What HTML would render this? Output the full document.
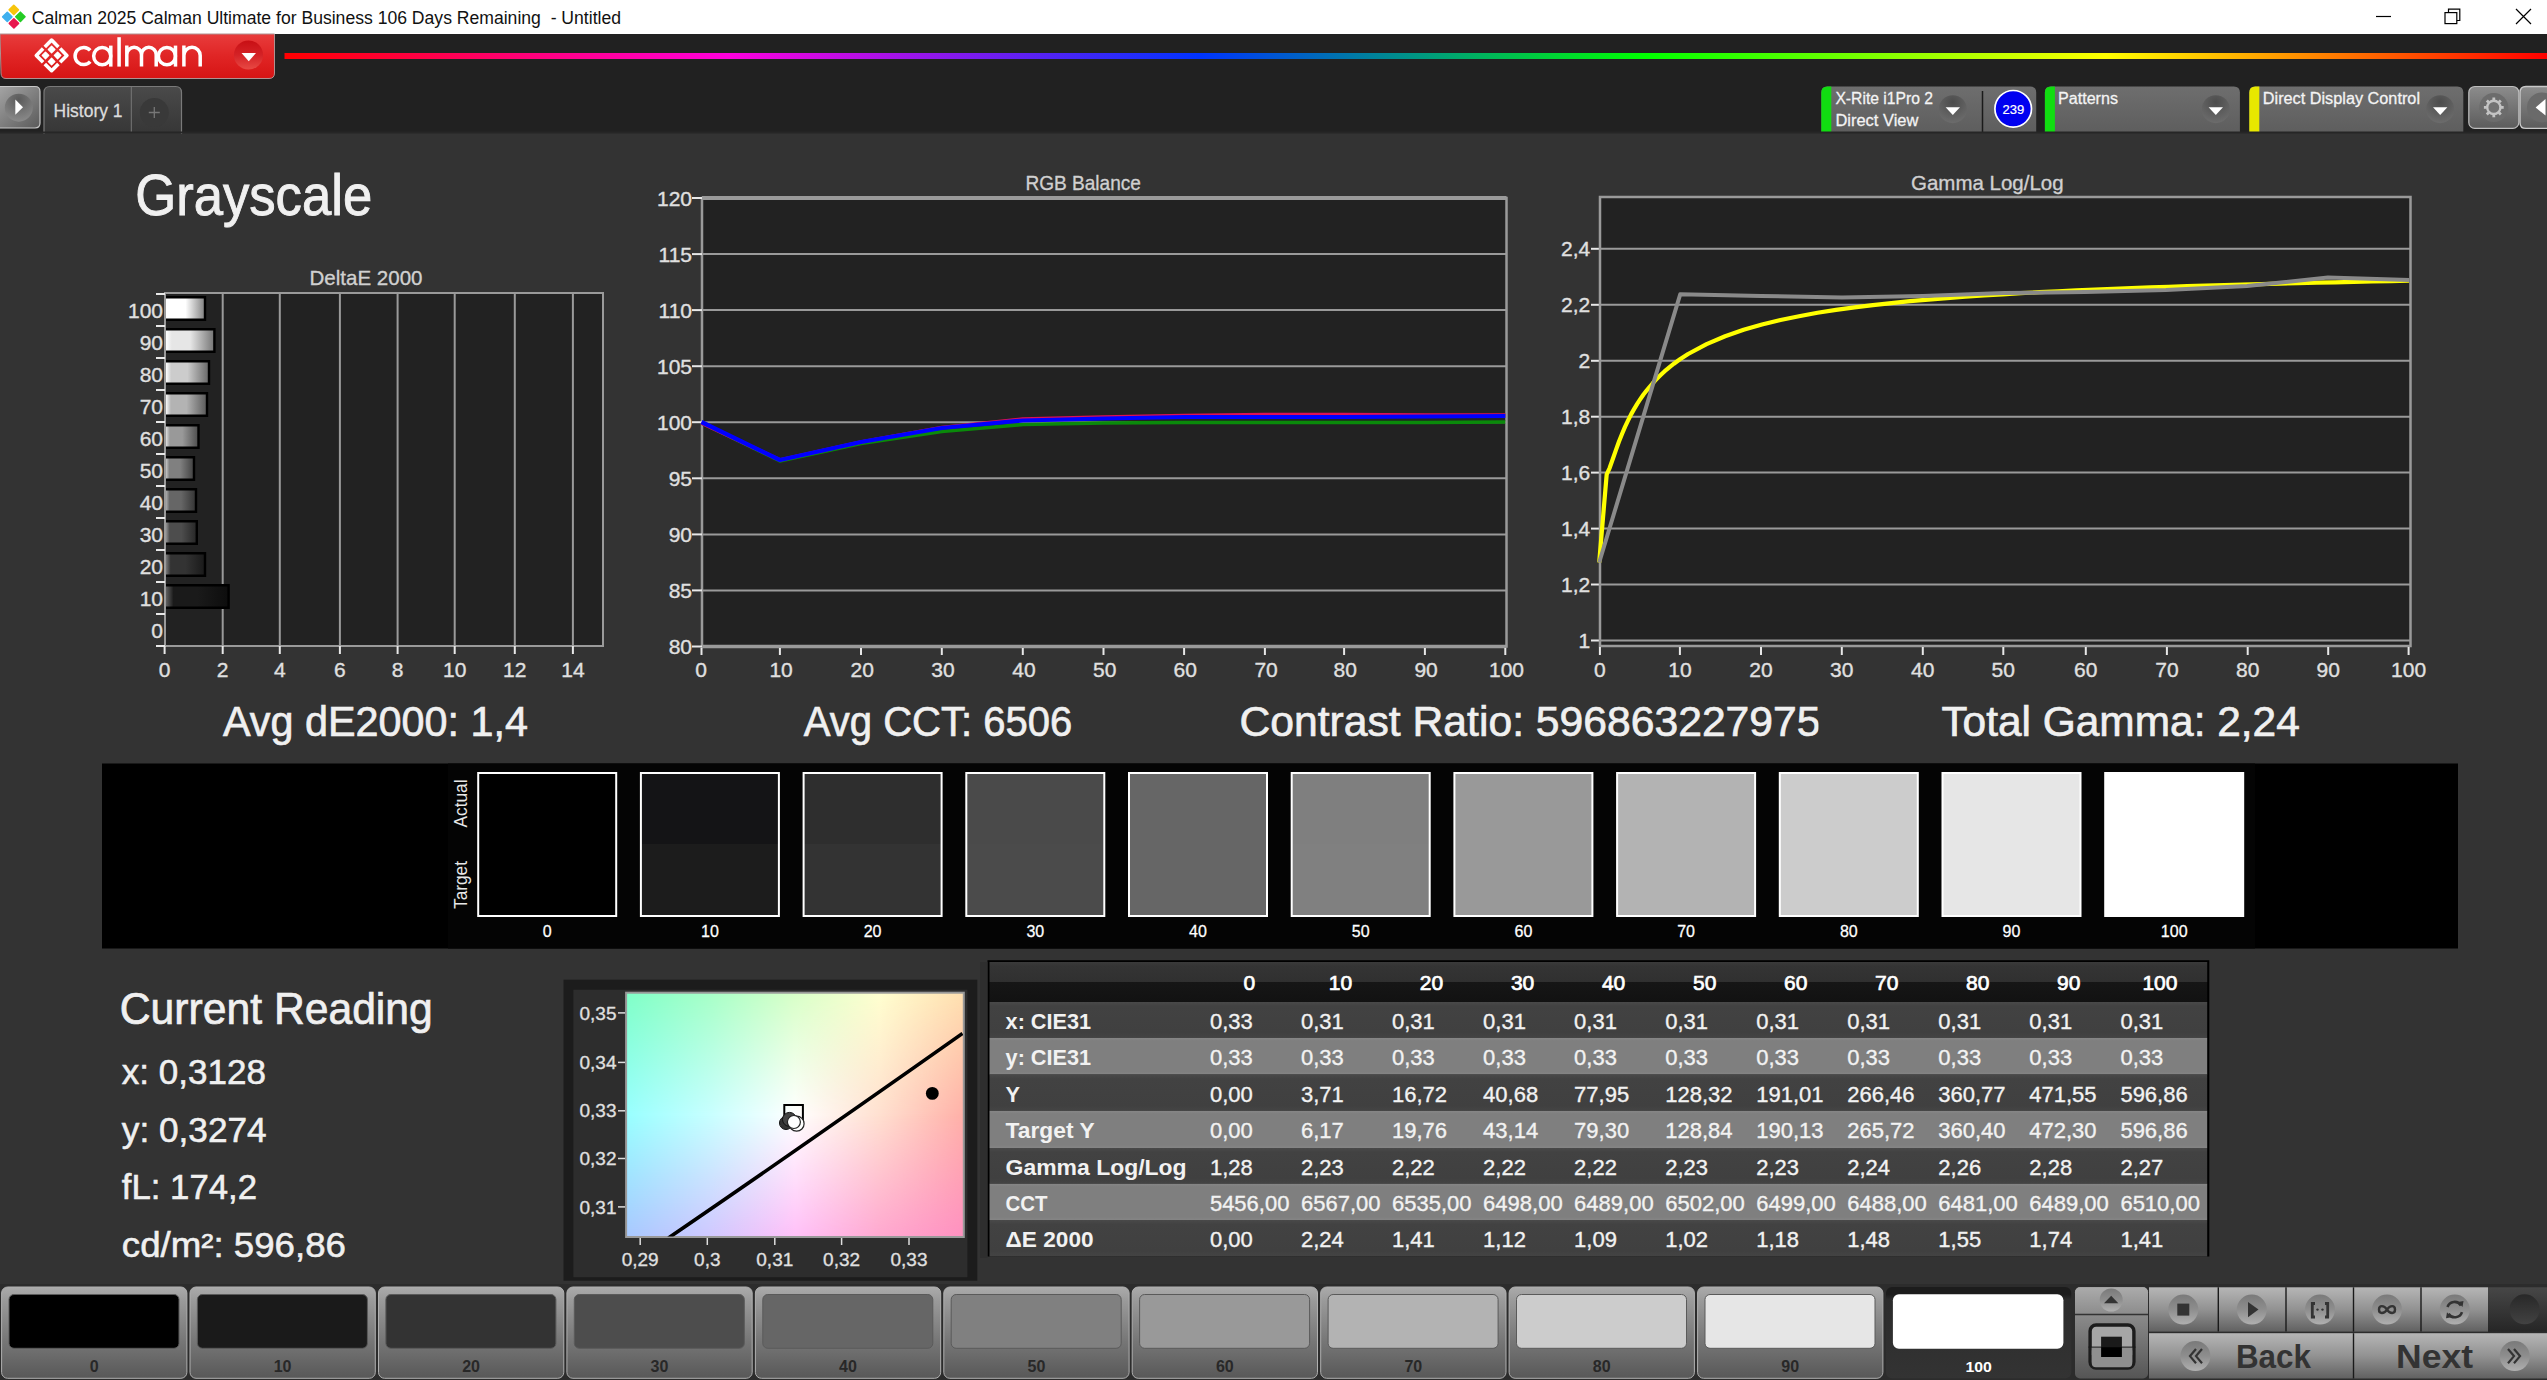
<!DOCTYPE html>
<html><head><meta charset="utf-8"><title>Calman</title>
<style>
html,body{margin:0;padding:0;background:#333;overflow:hidden;}
svg{display:block;}
text{font-family:"Liberation Sans", sans-serif;}
</style></head><body>
<svg width="2547" height="1380" viewBox="0 0 2547 1380">
<defs>
<linearGradient id="gRed" x1="0" y1="0" x2="0" y2="1">
<stop offset="0" stop-color="#e83c3c"/><stop offset="0.5" stop-color="#e02525"/><stop offset="1" stop-color="#d61414"/></linearGradient>
<linearGradient id="gRedBtn" x1="0" y1="0" x2="0" y2="1">
<stop offset="0" stop-color="#c80f14"/><stop offset="0.5" stop-color="#d42226"/><stop offset="1" stop-color="#e84a44"/></linearGradient>
<linearGradient id="gRain" x1="0" y1="0" x2="1" y2="0">
<stop offset="0" stop-color="#ff0000"/>
<stop offset="0.196" stop-color="#ff00dd"/>
<stop offset="0.404" stop-color="#0033ff"/>
<stop offset="0.602" stop-color="#00ff00"/>
<stop offset="0.805" stop-color="#ffff00"/>
<stop offset="1" stop-color="#ff0000"/></linearGradient>
<linearGradient id="gPlay" x1="0" y1="0" x2="1" y2="1">
<stop offset="0" stop-color="#a8a8a8"/><stop offset="1" stop-color="#5a5a5a"/></linearGradient>
<radialGradient id="gPlayC" cx="0.5" cy="0.2" r="0.8">
<stop offset="0" stop-color="#5a5a5a"/><stop offset="1" stop-color="#8a8a8a"/></radialGradient>
<linearGradient id="gTab" x1="0" y1="0" x2="0" y2="1">
<stop offset="0" stop-color="#4a4a4a"/><stop offset="1" stop-color="#363636"/></linearGradient>
<linearGradient id="gDev" x1="0" y1="0" x2="0" y2="1">
<stop offset="0" stop-color="#6e6e6e"/><stop offset="1" stop-color="#5e5e5e"/></linearGradient>
<radialGradient id="gDrop" cx="0.5" cy="0.25" r="0.75">
<stop offset="0" stop-color="#4c4c4c"/><stop offset="1" stop-color="#6c6c6c"/></radialGradient>
<linearGradient id="gGearBtn" x1="0" y1="0" x2="0" y2="1">
<stop offset="0" stop-color="#8c8c8c"/><stop offset="1" stop-color="#5c5c5c"/></linearGradient>
<linearGradient id="gBar1" x1="0" y1="0" x2="1" y2="0"><stop offset="0" stop-color="rgb(96,96,96)"/><stop offset="0.12" stop-color="rgb(26,26,26)"/><stop offset="0.5" stop-color="rgb(26,26,26)"/><stop offset="1" stop-color="rgb(13,13,13)"/></linearGradient>
<linearGradient id="gBar2" x1="0" y1="0" x2="1" y2="0"><stop offset="0" stop-color="rgb(121,121,121)"/><stop offset="0.12" stop-color="rgb(51,51,51)"/><stop offset="0.5" stop-color="rgb(51,51,51)"/><stop offset="1" stop-color="rgb(25,25,25)"/></linearGradient>
<linearGradient id="gBar3" x1="0" y1="0" x2="1" y2="0"><stop offset="0" stop-color="rgb(147,147,147)"/><stop offset="0.12" stop-color="rgb(77,77,77)"/><stop offset="0.5" stop-color="rgb(77,77,77)"/><stop offset="1" stop-color="rgb(38,38,38)"/></linearGradient>
<linearGradient id="gBar4" x1="0" y1="0" x2="1" y2="0"><stop offset="0" stop-color="rgb(172,172,172)"/><stop offset="0.12" stop-color="rgb(102,102,102)"/><stop offset="0.5" stop-color="rgb(102,102,102)"/><stop offset="1" stop-color="rgb(51,51,51)"/></linearGradient>
<linearGradient id="gBar5" x1="0" y1="0" x2="1" y2="0"><stop offset="0" stop-color="rgb(198,198,198)"/><stop offset="0.12" stop-color="rgb(128,128,128)"/><stop offset="0.5" stop-color="rgb(128,128,128)"/><stop offset="1" stop-color="rgb(64,64,64)"/></linearGradient>
<linearGradient id="gBar6" x1="0" y1="0" x2="1" y2="0"><stop offset="0" stop-color="rgb(223,223,223)"/><stop offset="0.12" stop-color="rgb(153,153,153)"/><stop offset="0.5" stop-color="rgb(153,153,153)"/><stop offset="1" stop-color="rgb(76,76,76)"/></linearGradient>
<linearGradient id="gBar7" x1="0" y1="0" x2="1" y2="0"><stop offset="0" stop-color="rgb(249,249,249)"/><stop offset="0.12" stop-color="rgb(179,179,179)"/><stop offset="0.5" stop-color="rgb(179,179,179)"/><stop offset="1" stop-color="rgb(89,89,89)"/></linearGradient>
<linearGradient id="gBar8" x1="0" y1="0" x2="1" y2="0"><stop offset="0" stop-color="rgb(255,255,255)"/><stop offset="0.12" stop-color="rgb(204,204,204)"/><stop offset="0.5" stop-color="rgb(204,204,204)"/><stop offset="1" stop-color="rgb(102,102,102)"/></linearGradient>
<linearGradient id="gBar9" x1="0" y1="0" x2="1" y2="0"><stop offset="0" stop-color="rgb(255,255,255)"/><stop offset="0.12" stop-color="rgb(230,230,230)"/><stop offset="0.5" stop-color="rgb(230,230,230)"/><stop offset="1" stop-color="rgb(115,115,115)"/></linearGradient>
<linearGradient id="gBar10" x1="0" y1="0" x2="1" y2="0"><stop offset="0" stop-color="rgb(255,255,255)"/><stop offset="0.12" stop-color="rgb(255,255,255)"/><stop offset="0.5" stop-color="rgb(255,255,255)"/><stop offset="1" stop-color="rgb(127,127,127)"/></linearGradient>
<linearGradient id="gCieT" x1="0" y1="0" x2="1" y2="0"><stop offset="0.0" stop-color="rgb(128,255,200)"/><stop offset="0.25" stop-color="rgb(168,255,200)"/><stop offset="0.5" stop-color="rgb(216,255,200)"/><stop offset="0.75" stop-color="rgb(255,255,208)"/><stop offset="1.0" stop-color="rgb(255,224,176)"/></linearGradient>
<linearGradient id="gCieM" x1="0" y1="0" x2="1" y2="0"><stop offset="0.0" stop-color="rgb(152,255,255)"/><stop offset="0.25" stop-color="rgb(200,255,255)"/><stop offset="0.5" stop-color="rgb(255,255,255)"/><stop offset="0.75" stop-color="rgb(255,224,208)"/><stop offset="1.0" stop-color="rgb(255,176,168)"/></linearGradient>
<linearGradient id="gCieB" x1="0" y1="0" x2="1" y2="0"><stop offset="0.0" stop-color="rgb(168,200,255)"/><stop offset="0.25" stop-color="rgb(208,200,255)"/><stop offset="0.5" stop-color="rgb(255,192,248)"/><stop offset="0.75" stop-color="rgb(255,168,208)"/><stop offset="1.0" stop-color="rgb(255,144,192)"/></linearGradient>
<linearGradient id="gMaskM" x1="0" y1="0" x2="0" y2="1"><stop offset="0" stop-color="#000"/><stop offset="0.5" stop-color="#fff"/><stop offset="1" stop-color="#fff"/></linearGradient>
<linearGradient id="gMaskB" x1="0" y1="0" x2="0" y2="1"><stop offset="0" stop-color="#000"/><stop offset="0.5" stop-color="#000"/><stop offset="1" stop-color="#fff"/></linearGradient>
<mask id="mCieM" maskUnits="userSpaceOnUse" x="626.1" y="992.7" width="337.69999999999993" height="244.29999999999995"><rect x="626.1" y="992.7" width="337.69999999999993" height="244.29999999999995" fill="url(#gMaskM)"/></mask>
<mask id="mCieB" maskUnits="userSpaceOnUse" x="626.1" y="992.7" width="337.69999999999993" height="244.29999999999995"><rect x="626.1" y="992.7" width="337.69999999999993" height="244.29999999999995" fill="url(#gMaskB)"/></mask>
<linearGradient id="gHdr" x1="0" y1="0" x2="0" y2="1">
<stop offset="0" stop-color="#3a3a3a"/><stop offset="0.1" stop-color="#343434"/><stop offset="0.5" stop-color="#303030"/>
<stop offset="0.5" stop-color="#161616"/><stop offset="1" stop-color="#121212"/></linearGradient>
<linearGradient id="gRowL" x1="0" y1="0" x2="0" y2="1">
<stop offset="0" stop-color="#878787"/><stop offset="0.08" stop-color="#7f7f7f"/><stop offset="0.92" stop-color="#7f7f7f"/><stop offset="1" stop-color="#858585"/></linearGradient>
<linearGradient id="gRowD" x1="0" y1="0" x2="0" y2="1">
<stop offset="0" stop-color="#494949"/><stop offset="0.12" stop-color="#424242"/><stop offset="0.85" stop-color="#404040"/><stop offset="1" stop-color="#444"/></linearGradient>
<linearGradient id="gBtn" x1="0" y1="0" x2="0" y2="1">
<stop offset="0" stop-color="#ababab"/><stop offset="0.15" stop-color="#9a9a9a"/><stop offset="0.6" stop-color="#767676"/><stop offset="1" stop-color="#585858"/></linearGradient>
<linearGradient id="gBtnSel" x1="0" y1="0" x2="0" y2="1">
<stop offset="0" stop-color="#1c1c1c"/><stop offset="0.08" stop-color="#1c1c1c"/><stop offset="0.14" stop-color="#2c2c2c"/><stop offset="1" stop-color="#333"/></linearGradient>
<linearGradient id="gCtl" x1="0" y1="0" x2="0" y2="1">
<stop offset="0" stop-color="#b6b6b6"/><stop offset="0.5" stop-color="#929292"/><stop offset="1" stop-color="#616161"/></linearGradient>
<linearGradient id="gDarkSec" x1="0" y1="0" x2="0" y2="1">
<stop offset="0" stop-color="#474747"/><stop offset="1" stop-color="#262626"/></linearGradient>
<linearGradient id="gDarkCirc" x1="0" y1="0" x2="0" y2="1">
<stop offset="0" stop-color="#282828"/><stop offset="1" stop-color="#424242"/></linearGradient>
<linearGradient id="gUpBtn" x1="0" y1="0" x2="0" y2="1">
<stop offset="0" stop-color="#ababab"/><stop offset="1" stop-color="#8c8c8c"/></linearGradient>
<linearGradient id="gCtl2" x1="0" y1="0" x2="0" y2="1">
<stop offset="0" stop-color="#a2a2a2"/><stop offset="1" stop-color="#555"/></linearGradient>
<linearGradient id="gIco" x1="0" y1="0" x2="0" y2="1">
<stop offset="0" stop-color="#7a7a7a"/><stop offset="0.5" stop-color="#8e8e8e"/><stop offset="1" stop-color="#b0b0b0"/></linearGradient>
</defs>
<rect x="0" y="0" width="2547" height="1380" fill="#333"/>
<rect x="0" y="0" width="2547" height="34" fill="#fff"/>
<rect x="0" y="34" width="2547" height="99" fill="#212121"/>
<path d="M13.8 5.300000000000001 L18.4 9.9 L13.8 14.5 L9.200000000000001 9.9 Z" fill="#f7c50c" stroke="#f7c50c" stroke-width="1.6" stroke-linejoin="round"/>
<path d="M20.4 12.200000000000001 L25.0 16.8 L20.4 21.4 L15.799999999999999 16.8 Z" fill="#25cc25" stroke="#25cc25" stroke-width="1.6" stroke-linejoin="round"/>
<path d="M7.3 12.299999999999999 L11.899999999999999 16.9 L7.3 21.5 L2.7 16.9 Z" fill="#3fb0ee" stroke="#3fb0ee" stroke-width="1.6" stroke-linejoin="round"/>
<path d="M13.9 18.799999999999997 L18.5 23.4 L13.9 28.0 L9.3 23.4 Z" fill="#e8194e" stroke="#e8194e" stroke-width="1.6" stroke-linejoin="round"/>
<text x="31.7" y="23.7" font-size="18.3" fill="#111" font-weight="normal" text-anchor="start" textLength="589.3" lengthAdjust="spacingAndGlyphs" style="white-space:pre">Calman 2025 Calman Ultimate for Business 106 Days Remaining  - Untitled</text>
<line x1="2376" y1="16.5" x2="2391" y2="16.5" stroke="#000" stroke-width="1.2"/>
<rect x="2445" y="12.6" width="11.8" height="11" fill="none" stroke="#000" stroke-width="1.2"/>
<path d="M2448.5 12.6 V9.2 H2459.8 V20.5 H2456.8" fill="none" stroke="#000" stroke-width="1.2"/>
<path d="M2516 9 L2531 24 M2531 9 L2516 24" stroke="#000" stroke-width="1.2"/>
<path d="M0 34 H274.5 V73 Q274.5 78.5 269 78.5 H6 Q1 78.5 1 73 Z" fill="url(#gRed)" stroke="#b09090" stroke-width="1"/>
<g stroke="#fff" stroke-width="3.6" fill="none" stroke-linecap="butt" stroke-linejoin="round">
<path d="M43.10 62.20 L36.30 55.40 L43.10 48.60"/>
<path d="M44.80 46.90 L51.60 40.10 L58.40 46.90"/>
<path d="M60.10 48.60 L66.90 55.40 L60.10 62.20"/>
<path d="M58.40 63.90 L51.60 70.70 L44.80 63.90"/>
</g>
<path d="M51.6 46.2 L54.9 49.5 L51.6 52.8 L48.300000000000004 49.5 Z" fill="#fff" stroke="#fff" stroke-width="1.3" stroke-linejoin="round"/>
<path d="M57.6 52.1 L60.9 55.4 L57.6 58.699999999999996 L54.300000000000004 55.4 Z" fill="#fff" stroke="#fff" stroke-width="1.3" stroke-linejoin="round"/>
<path d="M51.6 58.300000000000004 L54.9 61.6 L51.6 64.9 L48.300000000000004 61.6 Z" fill="#fff" stroke="#fff" stroke-width="1.3" stroke-linejoin="round"/>
<path d="M45.5 52.1 L48.8 55.4 L45.5 58.699999999999996 L42.2 55.4 Z" fill="#fff" stroke="#fff" stroke-width="1.3" stroke-linejoin="round"/>
<g fill="none" stroke="#fff" stroke-width="3.5"><path d="M90.2 50.4 A8.6 8.6 0 1 0 90.2 61.6"/><circle cx="102.2" cy="56.1" r="8.55"/><path d="M110.8 45.6 V66.6"/><path d="M119.1 37.2 V66.6"/><path d="M126.8 45.6 V66.6 M126.8 54.7 A7.35 7.35 0 0 1 141.5 54.7 V66.6 M141.5 54.7 A7.35 7.35 0 0 1 156.2 54.7 V66.6"/><circle cx="166.9" cy="56.1" r="8.55"/><path d="M175.5 45.6 V66.6"/><path d="M183.9 45.6 V66.6 M183.9 55.5 A8.15 8.15 0 0 1 200.2 55.5 V66.6"/></g>
<circle cx="248.5" cy="55" r="14.6" fill="url(#gRedBtn)"/>
<path d="M241.5 53 H256 L248.75 61.2 Z" fill="#fff"/>
<rect x="284.5" y="53" width="2262.5" height="6" fill="url(#gRain)"/>
<path d="M-5 86.5 H35 Q40 86.5 40 91.5 V123 Q40 128 35 128 H-5 Z" fill="url(#gPlay)" stroke="#c8c8c8" stroke-width="1.2"/>
<circle cx="18.8" cy="107.7" r="14" fill="url(#gPlayC)"/>
<path d="M15.3 99.5 L23 107.2 L15.3 114.8 Z" fill="#fff"/>
<path d="M44 134 V92.5 Q44 86.5 50 86.5 H175.5 Q181.5 86.5 181.5 92.5 V134" fill="url(#gTab)" stroke="#7a7a7a" stroke-width="1.2"/>
<line x1="131.3" y1="87" x2="131.3" y2="133" stroke="#777" stroke-width="1"/>
<text x="53.6" y="117.2" font-size="19.0" fill="#dcdcdc" font-weight="normal" text-anchor="start" textLength="68.9" lengthAdjust="spacingAndGlyphs" stroke="#dcdcdc" stroke-width="0.30" >History 1</text>
<circle cx="154.3" cy="112.4" r="14.5" fill="#393939"/>
<path d="M154.3 107 V118 M148.8 112.5 H159.8" stroke="#777" stroke-width="1.3"/>
<path d="M1821.3 132 V92.5 Q1821.3 86.5 1827.3 86.5 H2030.2 Q2036.2 86.5 2036.2 92.5 V132 Z" fill="url(#gDev)"/>
<path d="M1821.3 132 V92.5 Q1821.3 86.5 1827.3 86.5 H1831.3 V132 Z" fill="#11dd11"/>
<line x1="1982.5" y1="91" x2="1982.5" y2="132" stroke="#1a1a1a" stroke-width="1.5"/>
<text x="1835.4" y="104.0" font-size="16.0" fill="#f4f4f4" font-weight="normal" text-anchor="start" textLength="97.6" lengthAdjust="spacingAndGlyphs" stroke="#f4f4f4" stroke-width="0.26" >X-Rite i1Pro 2</text>
<text x="1835.4" y="125.7" font-size="16.0" fill="#f4f4f4" font-weight="normal" text-anchor="start" textLength="83.0" lengthAdjust="spacingAndGlyphs" stroke="#f4f4f4" stroke-width="0.26" >Direct View</text>
<circle cx="1952.8" cy="109.2" r="14" fill="url(#gDrop)"/>
<path d="M1945.6 107.3 H1960.0 L1952.8 114.9 Z" fill="#fff"/>
<circle cx="2013.2" cy="108.8" r="18.3" fill="#0000f0" stroke="#fff" stroke-width="1.7"/>
<text x="2002.6" y="113.9" font-size="13.0" fill="#fff" font-weight="normal" text-anchor="start" textLength="21.7" lengthAdjust="spacingAndGlyphs" stroke="#fff" stroke-width="0.21" >239</text>
<path d="M2044.9 132 V92.5 Q2044.9 86.5 2050.9 86.5 H2233.9 Q2239.9 86.5 2239.9 92.5 V132 Z" fill="url(#gDev)"/>
<path d="M2044.9 132 V92.5 Q2044.9 86.5 2050.9 86.5 H2054.9 V132 Z" fill="#11dd11"/>
<text x="2058.0" y="104.0" font-size="16.0" fill="#f4f4f4" font-weight="normal" text-anchor="start" textLength="60.0" lengthAdjust="spacingAndGlyphs" stroke="#f4f4f4" stroke-width="0.26" >Patterns</text>
<circle cx="2215.8" cy="109.2" r="14" fill="url(#gDrop)"/>
<path d="M2208.6000000000004 107.3 H2223.0 L2215.8 114.9 Z" fill="#fff"/>
<path d="M2249.3 132 V92.5 Q2249.3 86.5 2255.3 86.5 H2457.3 Q2463.3 86.5 2463.3 92.5 V132 Z" fill="url(#gDev)"/>
<path d="M2249.3 132 V92.5 Q2249.3 86.5 2255.3 86.5 H2259.3 V132 Z" fill="#e8e800"/>
<text x="2262.8" y="104.0" font-size="16.0" fill="#f4f4f4" font-weight="normal" text-anchor="start" textLength="157.2" lengthAdjust="spacingAndGlyphs" stroke="#f4f4f4" stroke-width="0.26" >Direct Display Control</text>
<circle cx="2440.2" cy="109.2" r="14" fill="url(#gDrop)"/>
<path d="M2433.0 107.3 H2447.3999999999996 L2440.2 114.9 Z" fill="#fff"/>
<rect x="2468.8" y="86.5" width="50" height="41.9" rx="6" fill="url(#gGearBtn)" stroke="#bdbdbd" stroke-width="1.2"/>
<circle cx="2493.8" cy="107.4" r="14.5" fill="#6c6c6c"/>
<circle cx="2493.8" cy="107.4" r="6.6" fill="#737373" stroke="#c4c4c4" stroke-width="2.4"/>
<line x1="2501.00" y1="107.40" x2="2503.70" y2="107.40" stroke="#c4c4c4" stroke-width="2.8"/>
<line x1="2498.89" y1="112.49" x2="2500.80" y2="114.40" stroke="#c4c4c4" stroke-width="2.8"/>
<line x1="2493.80" y1="114.60" x2="2493.80" y2="117.30" stroke="#c4c4c4" stroke-width="2.8"/>
<line x1="2488.71" y1="112.49" x2="2486.80" y2="114.40" stroke="#c4c4c4" stroke-width="2.8"/>
<line x1="2486.60" y1="107.40" x2="2483.90" y2="107.40" stroke="#c4c4c4" stroke-width="2.8"/>
<line x1="2488.71" y1="102.31" x2="2486.80" y2="100.40" stroke="#c4c4c4" stroke-width="2.8"/>
<line x1="2493.80" y1="100.20" x2="2493.80" y2="97.50" stroke="#c4c4c4" stroke-width="2.8"/>
<line x1="2498.89" y1="102.31" x2="2500.80" y2="100.40" stroke="#c4c4c4" stroke-width="2.8"/>
<path d="M2526 86.5 H2550 V128.4 H2526 Q2520 128.4 2520 122.4 V92.5 Q2520 86.5 2526 86.5 Z" fill="url(#gGearBtn)" stroke="#c8c8c8" stroke-width="1.4"/>
<circle cx="2542" cy="107.4" r="15" fill="#6a6a6a"/>
<path d="M2545.5 99 L2535.6 107.4 L2545.5 115.5 Z" fill="#fff"/>
<rect x="0" y="131.5" width="2547" height="2" fill="#262626"/>
<text x="135.2" y="215.3" font-size="57.5" fill="#f0f0f0" font-weight="normal" text-anchor="start" textLength="237.0" lengthAdjust="spacingAndGlyphs" stroke="#f0f0f0" stroke-width="0.92" >Grayscale</text>
<text x="309.5" y="285.2" font-size="21.0" fill="#d0d0d0" font-weight="normal" text-anchor="start" textLength="113.0" lengthAdjust="spacingAndGlyphs" stroke="#d0d0d0" stroke-width="0.34" >DeltaE 2000</text>
<rect x="165" y="293" width="438" height="353" fill="#222"/>
<line x1="222.7" y1="293" x2="222.7" y2="646" stroke="#9a9a9a" stroke-width="2"/>
<line x1="279.8" y1="293" x2="279.8" y2="646" stroke="#9a9a9a" stroke-width="2"/>
<line x1="339.9" y1="293" x2="339.9" y2="646" stroke="#9a9a9a" stroke-width="2"/>
<line x1="397.6" y1="293" x2="397.6" y2="646" stroke="#9a9a9a" stroke-width="2"/>
<line x1="454.7" y1="293" x2="454.7" y2="646" stroke="#9a9a9a" stroke-width="2"/>
<line x1="514.8" y1="293" x2="514.8" y2="646" stroke="#9a9a9a" stroke-width="2"/>
<line x1="572.9" y1="293" x2="572.9" y2="646" stroke="#9a9a9a" stroke-width="2"/>
<rect x="165" y="293" width="438" height="353" fill="none" stroke="#9a9a9a" stroke-width="2"/>
<line x1="156" y1="614.0" x2="165" y2="614.0" stroke="#e8e8e8" stroke-width="2"/>
<text x="163.0" y="637.8" font-size="21.0" fill="#e0e0e0" font-weight="normal" text-anchor="end" stroke="#e0e0e0" stroke-width="0.34" >0</text>
<rect x="166.0" y="585.2" width="62.6" height="22.6" fill="url(#gBar1)"/>
<path d="M166 585.2 H228.6 V607.8 H166" fill="none" stroke="#000" stroke-width="2.4"/>
<line x1="156" y1="582.0" x2="165" y2="582.0" stroke="#e8e8e8" stroke-width="2"/>
<text x="163.0" y="605.8" font-size="21.0" fill="#e0e0e0" font-weight="normal" text-anchor="end" stroke="#e0e0e0" stroke-width="0.34" >10</text>
<rect x="166.0" y="553.2" width="39.0" height="22.6" fill="url(#gBar2)"/>
<path d="M166 553.2 H205.0 V575.8 H166" fill="none" stroke="#000" stroke-width="2.4"/>
<line x1="156" y1="550.0" x2="165" y2="550.0" stroke="#e8e8e8" stroke-width="2"/>
<text x="163.0" y="573.8" font-size="21.0" fill="#e0e0e0" font-weight="normal" text-anchor="end" stroke="#e0e0e0" stroke-width="0.34" >20</text>
<rect x="166.0" y="521.2" width="30.8" height="22.6" fill="url(#gBar3)"/>
<path d="M166 521.2 H196.8 V543.8 H166" fill="none" stroke="#000" stroke-width="2.4"/>
<line x1="156" y1="518.0" x2="165" y2="518.0" stroke="#e8e8e8" stroke-width="2"/>
<text x="163.0" y="541.8" font-size="21.0" fill="#e0e0e0" font-weight="normal" text-anchor="end" stroke="#e0e0e0" stroke-width="0.34" >30</text>
<rect x="166.0" y="489.2" width="30.0" height="22.6" fill="url(#gBar4)"/>
<path d="M166 489.2 H196.0 V511.8 H166" fill="none" stroke="#000" stroke-width="2.4"/>
<line x1="156" y1="486.0" x2="165" y2="486.0" stroke="#e8e8e8" stroke-width="2"/>
<text x="163.0" y="509.8" font-size="21.0" fill="#e0e0e0" font-weight="normal" text-anchor="end" stroke="#e0e0e0" stroke-width="0.34" >40</text>
<rect x="166.0" y="457.2" width="28.0" height="22.6" fill="url(#gBar5)"/>
<path d="M166 457.2 H194.0 V479.8 H166" fill="none" stroke="#000" stroke-width="2.4"/>
<line x1="156" y1="454.0" x2="165" y2="454.0" stroke="#e8e8e8" stroke-width="2"/>
<text x="163.0" y="477.8" font-size="21.0" fill="#e0e0e0" font-weight="normal" text-anchor="end" stroke="#e0e0e0" stroke-width="0.34" >50</text>
<rect x="166.0" y="425.2" width="32.5" height="22.6" fill="url(#gBar6)"/>
<path d="M166 425.2 H198.5 V447.8 H166" fill="none" stroke="#000" stroke-width="2.4"/>
<line x1="156" y1="422.0" x2="165" y2="422.0" stroke="#e8e8e8" stroke-width="2"/>
<text x="163.0" y="445.8" font-size="21.0" fill="#e0e0e0" font-weight="normal" text-anchor="end" stroke="#e0e0e0" stroke-width="0.34" >60</text>
<rect x="166.0" y="393.2" width="41.0" height="22.6" fill="url(#gBar7)"/>
<path d="M166 393.2 H207.0 V415.8 H166" fill="none" stroke="#000" stroke-width="2.4"/>
<line x1="156" y1="390.0" x2="165" y2="390.0" stroke="#e8e8e8" stroke-width="2"/>
<text x="163.0" y="413.8" font-size="21.0" fill="#e0e0e0" font-weight="normal" text-anchor="end" stroke="#e0e0e0" stroke-width="0.34" >70</text>
<rect x="166.0" y="361.2" width="43.0" height="22.6" fill="url(#gBar8)"/>
<path d="M166 361.2 H209.0 V383.8 H166" fill="none" stroke="#000" stroke-width="2.4"/>
<line x1="156" y1="358.0" x2="165" y2="358.0" stroke="#e8e8e8" stroke-width="2"/>
<text x="163.0" y="381.8" font-size="21.0" fill="#e0e0e0" font-weight="normal" text-anchor="end" stroke="#e0e0e0" stroke-width="0.34" >80</text>
<rect x="166.0" y="329.2" width="48.4" height="22.6" fill="url(#gBar9)"/>
<path d="M166 329.2 H214.4 V351.8 H166" fill="none" stroke="#000" stroke-width="2.4"/>
<line x1="156" y1="326.0" x2="165" y2="326.0" stroke="#e8e8e8" stroke-width="2"/>
<text x="163.0" y="349.8" font-size="21.0" fill="#e0e0e0" font-weight="normal" text-anchor="end" stroke="#e0e0e0" stroke-width="0.34" >90</text>
<rect x="166.0" y="297.2" width="39.0" height="22.6" fill="url(#gBar10)"/>
<path d="M166 297.2 H205.0 V319.8 H166" fill="none" stroke="#000" stroke-width="2.4"/>
<line x1="156" y1="294.0" x2="165" y2="294.0" stroke="#e8e8e8" stroke-width="2"/>
<text x="163.0" y="317.8" font-size="21.0" fill="#e0e0e0" font-weight="normal" text-anchor="end" stroke="#e0e0e0" stroke-width="0.34" >100</text>
<line x1="156" y1="646" x2="165" y2="646" stroke="#e8e8e8" stroke-width="2"/>
<line x1="164.6" y1="646" x2="164.6" y2="654" stroke="#e8e8e8" stroke-width="2"/>
<text x="164.6" y="676.5" font-size="21.0" fill="#e0e0e0" font-weight="normal" text-anchor="middle" stroke="#e0e0e0" stroke-width="0.34" >0</text>
<line x1="222.7" y1="646" x2="222.7" y2="654" stroke="#e8e8e8" stroke-width="2"/>
<text x="222.7" y="676.5" font-size="21.0" fill="#e0e0e0" font-weight="normal" text-anchor="middle" stroke="#e0e0e0" stroke-width="0.34" >2</text>
<line x1="279.8" y1="646" x2="279.8" y2="654" stroke="#e8e8e8" stroke-width="2"/>
<text x="279.8" y="676.5" font-size="21.0" fill="#e0e0e0" font-weight="normal" text-anchor="middle" stroke="#e0e0e0" stroke-width="0.34" >4</text>
<line x1="339.9" y1="646" x2="339.9" y2="654" stroke="#e8e8e8" stroke-width="2"/>
<text x="339.9" y="676.5" font-size="21.0" fill="#e0e0e0" font-weight="normal" text-anchor="middle" stroke="#e0e0e0" stroke-width="0.34" >6</text>
<line x1="397.6" y1="646" x2="397.6" y2="654" stroke="#e8e8e8" stroke-width="2"/>
<text x="397.6" y="676.5" font-size="21.0" fill="#e0e0e0" font-weight="normal" text-anchor="middle" stroke="#e0e0e0" stroke-width="0.34" >8</text>
<line x1="454.7" y1="646" x2="454.7" y2="654" stroke="#e8e8e8" stroke-width="2"/>
<text x="454.7" y="676.5" font-size="21.0" fill="#e0e0e0" font-weight="normal" text-anchor="middle" stroke="#e0e0e0" stroke-width="0.34" >10</text>
<line x1="514.8" y1="646" x2="514.8" y2="654" stroke="#e8e8e8" stroke-width="2"/>
<text x="514.8" y="676.5" font-size="21.0" fill="#e0e0e0" font-weight="normal" text-anchor="middle" stroke="#e0e0e0" stroke-width="0.34" >12</text>
<line x1="572.9" y1="646" x2="572.9" y2="654" stroke="#e8e8e8" stroke-width="2"/>
<text x="572.9" y="676.5" font-size="21.0" fill="#e0e0e0" font-weight="normal" text-anchor="middle" stroke="#e0e0e0" stroke-width="0.34" >14</text>
<text x="1025.4" y="190.1" font-size="21.0" fill="#d0d0d0" font-weight="normal" text-anchor="start" textLength="115.5" lengthAdjust="spacingAndGlyphs" stroke="#d0d0d0" stroke-width="0.34" >RGB Balance</text>
<rect x="702" y="198" width="804.5" height="448.5" fill="#222"/>
<line x1="702" y1="254.1" x2="1506.5" y2="254.1" stroke="#9a9a9a" stroke-width="2"/>
<line x1="702" y1="310.1" x2="1506.5" y2="310.1" stroke="#9a9a9a" stroke-width="2"/>
<line x1="702" y1="366.2" x2="1506.5" y2="366.2" stroke="#9a9a9a" stroke-width="2"/>
<line x1="702" y1="422.2" x2="1506.5" y2="422.2" stroke="#9a9a9a" stroke-width="2"/>
<line x1="702" y1="478.3" x2="1506.5" y2="478.3" stroke="#9a9a9a" stroke-width="2"/>
<line x1="702" y1="534.4" x2="1506.5" y2="534.4" stroke="#9a9a9a" stroke-width="2"/>
<line x1="702" y1="590.4" x2="1506.5" y2="590.4" stroke="#9a9a9a" stroke-width="2"/>
<rect x="702" y="198" width="804.5" height="448.5" fill="none" stroke="#9a9a9a" stroke-width="2.5"/>
<line x1="702" y1="198" x2="1506.5" y2="198" stroke="#9a9a9a" stroke-width="4"/>
<line x1="702" y1="646.5" x2="1506.5" y2="646.5" stroke="#9a9a9a" stroke-width="3.5"/>
<line x1="692" y1="198.0" x2="702" y2="198.0" stroke="#e8e8e8" stroke-width="2"/>
<text x="692.0" y="205.6" font-size="21.0" fill="#e0e0e0" font-weight="normal" text-anchor="end" stroke="#e0e0e0" stroke-width="0.34" >120</text>
<line x1="692" y1="254.1" x2="702" y2="254.1" stroke="#e8e8e8" stroke-width="2"/>
<text x="692.0" y="261.7" font-size="21.0" fill="#e0e0e0" font-weight="normal" text-anchor="end" stroke="#e0e0e0" stroke-width="0.34" >115</text>
<line x1="692" y1="310.1" x2="702" y2="310.1" stroke="#e8e8e8" stroke-width="2"/>
<text x="692.0" y="317.7" font-size="21.0" fill="#e0e0e0" font-weight="normal" text-anchor="end" stroke="#e0e0e0" stroke-width="0.34" >110</text>
<line x1="692" y1="366.2" x2="702" y2="366.2" stroke="#e8e8e8" stroke-width="2"/>
<text x="692.0" y="373.8" font-size="21.0" fill="#e0e0e0" font-weight="normal" text-anchor="end" stroke="#e0e0e0" stroke-width="0.34" >105</text>
<line x1="692" y1="422.2" x2="702" y2="422.2" stroke="#e8e8e8" stroke-width="2"/>
<text x="692.0" y="429.9" font-size="21.0" fill="#e0e0e0" font-weight="normal" text-anchor="end" stroke="#e0e0e0" stroke-width="0.34" >100</text>
<line x1="692" y1="478.3" x2="702" y2="478.3" stroke="#e8e8e8" stroke-width="2"/>
<text x="692.0" y="485.9" font-size="21.0" fill="#e0e0e0" font-weight="normal" text-anchor="end" stroke="#e0e0e0" stroke-width="0.34" >95</text>
<line x1="692" y1="534.4" x2="702" y2="534.4" stroke="#e8e8e8" stroke-width="2"/>
<text x="692.0" y="542.0" font-size="21.0" fill="#e0e0e0" font-weight="normal" text-anchor="end" stroke="#e0e0e0" stroke-width="0.34" >90</text>
<line x1="692" y1="590.4" x2="702" y2="590.4" stroke="#e8e8e8" stroke-width="2"/>
<text x="692.0" y="598.0" font-size="21.0" fill="#e0e0e0" font-weight="normal" text-anchor="end" stroke="#e0e0e0" stroke-width="0.34" >85</text>
<line x1="692" y1="646.5" x2="702" y2="646.5" stroke="#e8e8e8" stroke-width="2"/>
<text x="692.0" y="654.1" font-size="21.0" fill="#e0e0e0" font-weight="normal" text-anchor="end" stroke="#e0e0e0" stroke-width="0.34" >80</text>
<line x1="701.5" y1="648" x2="701.5" y2="655" stroke="#e8e8e8" stroke-width="2"/>
<text x="701.0" y="676.5" font-size="21.0" fill="#e0e0e0" font-weight="normal" text-anchor="middle" stroke="#e0e0e0" stroke-width="0.34" >0</text>
<line x1="779.9" y1="648" x2="779.9" y2="655" stroke="#e8e8e8" stroke-width="2"/>
<text x="781.1" y="676.5" font-size="21.0" fill="#e0e0e0" font-weight="normal" text-anchor="middle" stroke="#e0e0e0" stroke-width="0.34" >10</text>
<line x1="861.0" y1="648" x2="861.0" y2="655" stroke="#e8e8e8" stroke-width="2"/>
<text x="862.2" y="676.5" font-size="21.0" fill="#e0e0e0" font-weight="normal" text-anchor="middle" stroke="#e0e0e0" stroke-width="0.34" >20</text>
<line x1="941.8" y1="648" x2="941.8" y2="655" stroke="#e8e8e8" stroke-width="2"/>
<text x="943.0" y="676.5" font-size="21.0" fill="#e0e0e0" font-weight="normal" text-anchor="middle" stroke="#e0e0e0" stroke-width="0.34" >30</text>
<line x1="1022.8" y1="648" x2="1022.8" y2="655" stroke="#e8e8e8" stroke-width="2"/>
<text x="1024.0" y="676.5" font-size="21.0" fill="#e0e0e0" font-weight="normal" text-anchor="middle" stroke="#e0e0e0" stroke-width="0.34" >40</text>
<line x1="1103.5" y1="648" x2="1103.5" y2="655" stroke="#e8e8e8" stroke-width="2"/>
<text x="1104.7" y="676.5" font-size="21.0" fill="#e0e0e0" font-weight="normal" text-anchor="middle" stroke="#e0e0e0" stroke-width="0.34" >50</text>
<line x1="1184.1" y1="648" x2="1184.1" y2="655" stroke="#e8e8e8" stroke-width="2"/>
<text x="1185.3" y="676.5" font-size="21.0" fill="#e0e0e0" font-weight="normal" text-anchor="middle" stroke="#e0e0e0" stroke-width="0.34" >60</text>
<line x1="1264.9" y1="648" x2="1264.9" y2="655" stroke="#e8e8e8" stroke-width="2"/>
<text x="1266.1" y="676.5" font-size="21.0" fill="#e0e0e0" font-weight="normal" text-anchor="middle" stroke="#e0e0e0" stroke-width="0.34" >70</text>
<line x1="1344.1" y1="648" x2="1344.1" y2="655" stroke="#e8e8e8" stroke-width="2"/>
<text x="1345.3" y="676.5" font-size="21.0" fill="#e0e0e0" font-weight="normal" text-anchor="middle" stroke="#e0e0e0" stroke-width="0.34" >80</text>
<line x1="1424.9" y1="648" x2="1424.9" y2="655" stroke="#e8e8e8" stroke-width="2"/>
<text x="1426.1" y="676.5" font-size="21.0" fill="#e0e0e0" font-weight="normal" text-anchor="middle" stroke="#e0e0e0" stroke-width="0.34" >90</text>
<line x1="1505.3" y1="648" x2="1505.3" y2="655" stroke="#e8e8e8" stroke-width="2"/>
<text x="1506.5" y="676.5" font-size="21.0" fill="#e0e0e0" font-weight="normal" text-anchor="middle" stroke="#e0e0e0" stroke-width="0.34" >100</text>
<polyline points="701.5,423.0 779.9,461.0 861.0,443.5 941.8,431.5 1022.8,424.5 1103.5,423.0 1184.1,422.5 1264.9,422.5 1344.1,422.5 1424.9,422.5 1505.3,422.0" fill="none" stroke="#0a8a0a" stroke-width="3.6" stroke-linejoin="round"/>
<polyline points="701.5,423.0 779.9,460.0 861.0,442.0 941.8,427.5 1022.8,419.0 1103.5,417.0 1184.1,415.5 1264.9,414.5 1344.1,414.5 1424.9,415.0 1505.3,415.0" fill="none" stroke="#dd1155" stroke-width="3.6" stroke-linejoin="round"/>
<polyline points="701.5,422.0 779.9,460.0 861.0,442.0 941.8,428.0 1022.8,420.5 1103.5,418.5 1184.1,417.0 1264.9,417.0 1344.1,417.0 1424.9,416.5 1505.3,416.0" fill="none" stroke="#0000ff" stroke-width="4.2" stroke-linejoin="round"/>
<text x="1911.0" y="190.1" font-size="21.0" fill="#d0d0d0" font-weight="normal" text-anchor="start" textLength="152.6" lengthAdjust="spacingAndGlyphs" stroke="#d0d0d0" stroke-width="0.34" >Gamma Log/Log</text>
<rect x="1600" y="197" width="810.5" height="449" fill="#222"/>
<line x1="1600" y1="640.5" x2="2410.5" y2="640.5" stroke="#9a9a9a" stroke-width="2"/>
<line x1="1591" y1="640.5" x2="1600" y2="640.5" stroke="#e8e8e8" stroke-width="2"/>
<text x="1590.3" y="647.5" font-size="21.0" fill="#e0e0e0" font-weight="normal" text-anchor="end" stroke="#e0e0e0" stroke-width="0.34" >1</text>
<line x1="1600" y1="584.5" x2="2410.5" y2="584.5" stroke="#9a9a9a" stroke-width="2"/>
<line x1="1591" y1="584.5" x2="1600" y2="584.5" stroke="#e8e8e8" stroke-width="2"/>
<text x="1590.3" y="591.5" font-size="21.0" fill="#e0e0e0" font-weight="normal" text-anchor="end" stroke="#e0e0e0" stroke-width="0.34" >1,2</text>
<line x1="1600" y1="528.6" x2="2410.5" y2="528.6" stroke="#9a9a9a" stroke-width="2"/>
<line x1="1591" y1="528.6" x2="1600" y2="528.6" stroke="#e8e8e8" stroke-width="2"/>
<text x="1590.3" y="535.6" font-size="21.0" fill="#e0e0e0" font-weight="normal" text-anchor="end" stroke="#e0e0e0" stroke-width="0.34" >1,4</text>
<line x1="1600" y1="472.6" x2="2410.5" y2="472.6" stroke="#9a9a9a" stroke-width="2"/>
<line x1="1591" y1="472.6" x2="1600" y2="472.6" stroke="#e8e8e8" stroke-width="2"/>
<text x="1590.3" y="479.6" font-size="21.0" fill="#e0e0e0" font-weight="normal" text-anchor="end" stroke="#e0e0e0" stroke-width="0.34" >1,6</text>
<line x1="1600" y1="416.7" x2="2410.5" y2="416.7" stroke="#9a9a9a" stroke-width="2"/>
<line x1="1591" y1="416.7" x2="1600" y2="416.7" stroke="#e8e8e8" stroke-width="2"/>
<text x="1590.3" y="423.7" font-size="21.0" fill="#e0e0e0" font-weight="normal" text-anchor="end" stroke="#e0e0e0" stroke-width="0.34" >1,8</text>
<line x1="1600" y1="360.8" x2="2410.5" y2="360.8" stroke="#9a9a9a" stroke-width="2"/>
<line x1="1591" y1="360.8" x2="1600" y2="360.8" stroke="#e8e8e8" stroke-width="2"/>
<text x="1590.3" y="367.8" font-size="21.0" fill="#e0e0e0" font-weight="normal" text-anchor="end" stroke="#e0e0e0" stroke-width="0.34" >2</text>
<line x1="1600" y1="304.8" x2="2410.5" y2="304.8" stroke="#9a9a9a" stroke-width="2"/>
<line x1="1591" y1="304.8" x2="1600" y2="304.8" stroke="#e8e8e8" stroke-width="2"/>
<text x="1590.3" y="311.8" font-size="21.0" fill="#e0e0e0" font-weight="normal" text-anchor="end" stroke="#e0e0e0" stroke-width="0.34" >2,2</text>
<line x1="1600" y1="248.8" x2="2410.5" y2="248.8" stroke="#9a9a9a" stroke-width="2"/>
<line x1="1591" y1="248.8" x2="1600" y2="248.8" stroke="#e8e8e8" stroke-width="2"/>
<text x="1590.3" y="255.8" font-size="21.0" fill="#e0e0e0" font-weight="normal" text-anchor="end" stroke="#e0e0e0" stroke-width="0.34" >2,4</text>
<rect x="1600" y="197" width="810.5" height="449" fill="none" stroke="#9a9a9a" stroke-width="2.5"/>
<line x1="1599.9" y1="647" x2="1599.9" y2="655" stroke="#e8e8e8" stroke-width="2"/>
<text x="1599.9" y="676.5" font-size="21.0" fill="#e0e0e0" font-weight="normal" text-anchor="middle" stroke="#e0e0e0" stroke-width="0.34" >0</text>
<line x1="1679.9" y1="647" x2="1679.9" y2="655" stroke="#e8e8e8" stroke-width="2"/>
<text x="1679.9" y="676.5" font-size="21.0" fill="#e0e0e0" font-weight="normal" text-anchor="middle" stroke="#e0e0e0" stroke-width="0.34" >10</text>
<line x1="1761.0" y1="647" x2="1761.0" y2="655" stroke="#e8e8e8" stroke-width="2"/>
<text x="1761.0" y="676.5" font-size="21.0" fill="#e0e0e0" font-weight="normal" text-anchor="middle" stroke="#e0e0e0" stroke-width="0.34" >20</text>
<line x1="1841.8" y1="647" x2="1841.8" y2="655" stroke="#e8e8e8" stroke-width="2"/>
<text x="1841.8" y="676.5" font-size="21.0" fill="#e0e0e0" font-weight="normal" text-anchor="middle" stroke="#e0e0e0" stroke-width="0.34" >30</text>
<line x1="1922.8" y1="647" x2="1922.8" y2="655" stroke="#e8e8e8" stroke-width="2"/>
<text x="1922.8" y="676.5" font-size="21.0" fill="#e0e0e0" font-weight="normal" text-anchor="middle" stroke="#e0e0e0" stroke-width="0.34" >40</text>
<line x1="2003.3" y1="647" x2="2003.3" y2="655" stroke="#e8e8e8" stroke-width="2"/>
<text x="2003.3" y="676.5" font-size="21.0" fill="#e0e0e0" font-weight="normal" text-anchor="middle" stroke="#e0e0e0" stroke-width="0.34" >50</text>
<line x1="2085.8" y1="647" x2="2085.8" y2="655" stroke="#e8e8e8" stroke-width="2"/>
<text x="2085.8" y="676.5" font-size="21.0" fill="#e0e0e0" font-weight="normal" text-anchor="middle" stroke="#e0e0e0" stroke-width="0.34" >60</text>
<line x1="2166.9" y1="647" x2="2166.9" y2="655" stroke="#e8e8e8" stroke-width="2"/>
<text x="2166.9" y="676.5" font-size="21.0" fill="#e0e0e0" font-weight="normal" text-anchor="middle" stroke="#e0e0e0" stroke-width="0.34" >70</text>
<line x1="2247.7" y1="647" x2="2247.7" y2="655" stroke="#e8e8e8" stroke-width="2"/>
<text x="2247.7" y="676.5" font-size="21.0" fill="#e0e0e0" font-weight="normal" text-anchor="middle" stroke="#e0e0e0" stroke-width="0.34" >80</text>
<line x1="2328.2" y1="647" x2="2328.2" y2="655" stroke="#e8e8e8" stroke-width="2"/>
<text x="2328.2" y="676.5" font-size="21.0" fill="#e0e0e0" font-weight="normal" text-anchor="middle" stroke="#e0e0e0" stroke-width="0.34" >90</text>
<line x1="2408.6" y1="647" x2="2408.6" y2="655" stroke="#e8e8e8" stroke-width="2"/>
<text x="2408.6" y="676.5" font-size="21.0" fill="#e0e0e0" font-weight="normal" text-anchor="middle" stroke="#e0e0e0" stroke-width="0.34" >100</text>
<polyline points="1599.2,562.5 1606.7,474.3 1609.7,467.8 1612.8,459.0 1615.9,450.1 1618.9,441.7 1622.0,434.0 1625.0,426.9 1628.1,420.4 1631.1,414.4 1634.2,408.9 1637.2,403.9 1640.3,399.2 1643.3,394.8 1646.4,390.8 1649.5,387.0 1652.5,383.5 1655.6,380.1 1658.6,377.0 1661.7,374.0 1664.7,371.2 1667.8,368.6 1670.8,366.1 1673.9,363.7 1676.9,361.5 1680.0,359.3 1688.1,354.0 1706.6,344.1 1725.1,336.2 1743.6,329.8 1762.0,324.5 1780.5,320.0 1799.0,316.2 1817.5,312.8 1836.0,309.9 1854.5,307.4 1872.9,305.1 1891.4,303.1 1909.9,301.2 1928.4,299.6 1946.9,298.1 1965.4,296.7 1983.9,295.4 2002.3,294.3 2020.8,293.2 2039.3,292.2 2057.8,291.3 2076.3,290.4 2094.8,289.6 2113.2,288.8 2131.7,288.1 2150.2,287.4 2168.7,286.8 2187.2,286.2 2205.7,285.6 2224.2,285.1 2242.6,284.6 2261.1,284.1 2279.6,283.6 2298.1,283.1 2316.6,282.7 2335.1,282.3 2353.5,281.9 2372.0,281.5 2390.5,281.1 2409.0,280.7" fill="none" stroke="#ffff00" stroke-width="4.2" stroke-linejoin="round"/>
<polyline points="1599.2,562.5 1680.2,294.3 1761,296 1842,297.5 1923,296 2004,293 2085,292 2166,290 2247,286 2328,277.5 2409,280" fill="none" stroke="#8a8a8a" stroke-width="4" stroke-linejoin="round"/>
<text x="223.0" y="735.6" font-size="42.5" fill="#f0f0f0" font-weight="normal" text-anchor="start" textLength="305.0" lengthAdjust="spacingAndGlyphs" stroke="#f0f0f0" stroke-width="0.68" >Avg dE2000: 1,4</text>
<text x="803.8" y="735.6" font-size="42.5" fill="#f0f0f0" font-weight="normal" text-anchor="start" textLength="268.5" lengthAdjust="spacingAndGlyphs" stroke="#f0f0f0" stroke-width="0.68" >Avg CCT: 6506</text>
<clipPath id="cpCR"><rect x="1200" y="690" width="618.4" height="60"/></clipPath>
<text x="1239.5" y="735.6" font-size="42.5" fill="#f0f0f0" font-weight="normal" text-anchor="start" textLength="581.0" lengthAdjust="spacingAndGlyphs" stroke="#f0f0f0" stroke-width="0.68" clip-path="url(#cpCR)">Contrast Ratio: 596863227975</text>
<text x="1941.4" y="735.6" font-size="42.5" fill="#f0f0f0" font-weight="normal" text-anchor="start" textLength="358.4" lengthAdjust="spacingAndGlyphs" stroke="#f0f0f0" stroke-width="0.68" >Total Gamma: 2,24</text>
<rect x="102" y="763.5" width="2356" height="185" fill="#000"/>
<rect x="448" y="763.5" width="1807" height="185" fill="#040404"/>
<g transform="translate(467,827.5) rotate(-90)"><text x="0" y="0" font-size="18" fill="#e8e8e8" textLength="48" lengthAdjust="spacingAndGlyphs">Actual</text></g>
<g transform="translate(467,909) rotate(-90)"><text x="0" y="0" font-size="18" fill="#e8e8e8" textLength="48" lengthAdjust="spacingAndGlyphs">Target</text></g>
<rect x="478.2" y="773" width="138" height="71" fill="#000"/>
<rect x="478.2" y="844" width="138" height="72" fill="#000"/>
<rect x="478.2" y="773" width="138" height="143" fill="none" stroke="#fff" stroke-width="2"/>
<text x="547.2" y="936.5" font-size="16.0" fill="#fff" font-weight="normal" text-anchor="middle" stroke="#fff" stroke-width="0.26" >0</text>
<rect x="640.9" y="773" width="138" height="71" fill="#141416"/>
<rect x="640.9" y="844" width="138" height="72" fill="#1c1c1c"/>
<rect x="640.9" y="773" width="138" height="143" fill="none" stroke="#fff" stroke-width="2"/>
<text x="709.9" y="936.5" font-size="16.0" fill="#fff" font-weight="normal" text-anchor="middle" stroke="#fff" stroke-width="0.26" >10</text>
<rect x="803.6" y="773" width="138" height="71" fill="#2e2e2e"/>
<rect x="803.6" y="844" width="138" height="72" fill="#333"/>
<rect x="803.6" y="773" width="138" height="143" fill="none" stroke="#fff" stroke-width="2"/>
<text x="872.6" y="936.5" font-size="16.0" fill="#fff" font-weight="normal" text-anchor="middle" stroke="#fff" stroke-width="0.26" >20</text>
<rect x="966.3" y="773" width="138" height="71" fill="#4a4a4a"/>
<rect x="966.3" y="844" width="138" height="72" fill="#4b4b4b"/>
<rect x="966.3" y="773" width="138" height="143" fill="none" stroke="#fff" stroke-width="2"/>
<text x="1035.3" y="936.5" font-size="16.0" fill="#fff" font-weight="normal" text-anchor="middle" stroke="#fff" stroke-width="0.26" >30</text>
<rect x="1129.0" y="773" width="138" height="71" fill="#666"/>
<rect x="1129.0" y="844" width="138" height="72" fill="#666"/>
<rect x="1129.0" y="773" width="138" height="143" fill="none" stroke="#fff" stroke-width="2"/>
<text x="1198.0" y="936.5" font-size="16.0" fill="#fff" font-weight="normal" text-anchor="middle" stroke="#fff" stroke-width="0.26" >40</text>
<rect x="1291.7" y="773" width="138" height="71" fill="#7f7f7f"/>
<rect x="1291.7" y="844" width="138" height="72" fill="#808080"/>
<rect x="1291.7" y="773" width="138" height="143" fill="none" stroke="#fff" stroke-width="2"/>
<text x="1360.7" y="936.5" font-size="16.0" fill="#fff" font-weight="normal" text-anchor="middle" stroke="#fff" stroke-width="0.26" >50</text>
<rect x="1454.4" y="773" width="138" height="71" fill="#999"/>
<rect x="1454.4" y="844" width="138" height="72" fill="#999"/>
<rect x="1454.4" y="773" width="138" height="143" fill="none" stroke="#fff" stroke-width="2"/>
<text x="1523.4" y="936.5" font-size="16.0" fill="#fff" font-weight="normal" text-anchor="middle" stroke="#fff" stroke-width="0.26" >60</text>
<rect x="1617.1" y="773" width="138" height="71" fill="#b3b3b3"/>
<rect x="1617.1" y="844" width="138" height="72" fill="#b3b3b3"/>
<rect x="1617.1" y="773" width="138" height="143" fill="none" stroke="#fff" stroke-width="2"/>
<text x="1686.1" y="936.5" font-size="16.0" fill="#fff" font-weight="normal" text-anchor="middle" stroke="#fff" stroke-width="0.26" >70</text>
<rect x="1779.8" y="773" width="138" height="71" fill="#ccc"/>
<rect x="1779.8" y="844" width="138" height="72" fill="#ccc"/>
<rect x="1779.8" y="773" width="138" height="143" fill="none" stroke="#fff" stroke-width="2"/>
<text x="1848.8" y="936.5" font-size="16.0" fill="#fff" font-weight="normal" text-anchor="middle" stroke="#fff" stroke-width="0.26" >80</text>
<rect x="1942.5" y="773" width="138" height="71" fill="#e6e6e6"/>
<rect x="1942.5" y="844" width="138" height="72" fill="#e6e6e6"/>
<rect x="1942.5" y="773" width="138" height="143" fill="none" stroke="#fff" stroke-width="2"/>
<text x="2011.5" y="936.5" font-size="16.0" fill="#fff" font-weight="normal" text-anchor="middle" stroke="#fff" stroke-width="0.26" >90</text>
<rect x="2105.2" y="773" width="138" height="71" fill="#fff"/>
<rect x="2105.2" y="844" width="138" height="72" fill="#fff"/>
<rect x="2105.2" y="773" width="138" height="143" fill="none" stroke="#fff" stroke-width="2"/>
<text x="2174.2" y="936.5" font-size="16.0" fill="#fff" font-weight="normal" text-anchor="middle" stroke="#fff" stroke-width="0.26" >100</text>
<text x="119.8" y="1024.2" font-size="43.5" fill="#f0f0f0" font-weight="normal" text-anchor="start" textLength="313.0" lengthAdjust="spacingAndGlyphs" stroke="#f0f0f0" stroke-width="0.70" >Current Reading</text>
<text x="121.8" y="1083.6" font-size="34.5" fill="#f0f0f0" font-weight="normal" text-anchor="start" textLength="144.2" lengthAdjust="spacingAndGlyphs" stroke="#f0f0f0" stroke-width="0.55" >x: 0,3128</text>
<text x="121.8" y="1141.9" font-size="34.5" fill="#f0f0f0" font-weight="normal" text-anchor="start" textLength="144.9" lengthAdjust="spacingAndGlyphs" stroke="#f0f0f0" stroke-width="0.55" >y: 0,3274</text>
<text x="121.8" y="1199.0" font-size="34.5" fill="#f0f0f0" font-weight="normal" text-anchor="start" textLength="135.2" lengthAdjust="spacingAndGlyphs" stroke="#f0f0f0" stroke-width="0.55" >fL: 174,2</text>
<text x="121.8" y="1256.7" font-size="34.5" fill="#f0f0f0" font-weight="normal" text-anchor="start" textLength="224.2" lengthAdjust="spacingAndGlyphs" stroke="#f0f0f0" stroke-width="0.55" >cd/m²: 596,86</text>
<rect x="563.5" y="979.7" width="413.8" height="301" fill="#1c1c1c"/>
<rect x="573.4" y="989.7" width="394" height="287.5" fill="#2d2d2d"/>
<rect x="626.1" y="992.7" width="337.7" height="244.3" fill="url(#gCieT)"/>
<rect x="626.1" y="992.7" width="337.7" height="244.3" fill="url(#gCieM)" mask="url(#mCieM)"/>
<rect x="626.1" y="992.7" width="337.7" height="244.3" fill="url(#gCieB)" mask="url(#mCieB)"/>
<rect x="626.1" y="992.7" width="337.7" height="244.3" fill="none" stroke="#999" stroke-width="2"/>
<clipPath id="cpCie"><rect x="627" y="993.5" width="336" height="243"/></clipPath>
<path d="M668.4 1238 Q803 1146 962.5 1033.5" fill="none" stroke="#000" stroke-width="3.6" clip-path="url(#cpCie)"/>
<circle cx="932.3" cy="1093.4" r="6.4" fill="#000"/>
<rect x="784.3" y="1105" width="18.6" height="19" fill="none" stroke="#000" stroke-width="2"/>
<circle cx="786" cy="1123" r="6.5" fill="#333" stroke="#111" stroke-width="1"/>
<circle cx="789.5" cy="1119.4" r="7" fill="#444" stroke="#111" stroke-width="1"/>
<circle cx="796.6" cy="1123.7" r="7.5" fill="#fff" stroke="#222" stroke-width="1.2"/>
<circle cx="793.9" cy="1122" r="6.5" fill="#fff" stroke="#222" stroke-width="1.2"/>
<line x1="618" y1="1012.9" x2="625" y2="1012.9" stroke="#ddd" stroke-width="1.5"/>
<text x="616.5" y="1019.5" font-size="19.0" fill="#e0e0e0" font-weight="normal" text-anchor="end" stroke="#e0e0e0" stroke-width="0.30" >0,35</text>
<line x1="618" y1="1062.4" x2="625" y2="1062.4" stroke="#ddd" stroke-width="1.5"/>
<text x="616.5" y="1069.0" font-size="19.0" fill="#e0e0e0" font-weight="normal" text-anchor="end" stroke="#e0e0e0" stroke-width="0.30" >0,34</text>
<line x1="618" y1="1110.8" x2="625" y2="1110.8" stroke="#ddd" stroke-width="1.5"/>
<text x="616.5" y="1117.4" font-size="19.0" fill="#e0e0e0" font-weight="normal" text-anchor="end" stroke="#e0e0e0" stroke-width="0.30" >0,33</text>
<line x1="618" y1="1158.5" x2="625" y2="1158.5" stroke="#ddd" stroke-width="1.5"/>
<text x="616.5" y="1165.1" font-size="19.0" fill="#e0e0e0" font-weight="normal" text-anchor="end" stroke="#e0e0e0" stroke-width="0.30" >0,32</text>
<line x1="618" y1="1206.9" x2="625" y2="1206.9" stroke="#ddd" stroke-width="1.5"/>
<text x="616.5" y="1213.5" font-size="19.0" fill="#e0e0e0" font-weight="normal" text-anchor="end" stroke="#e0e0e0" stroke-width="0.30" >0,31</text>
<line x1="640.2" y1="1238" x2="640.2" y2="1245" stroke="#ddd" stroke-width="1.5"/>
<text x="640.2" y="1265.5" font-size="19.0" fill="#e0e0e0" font-weight="normal" text-anchor="middle" stroke="#e0e0e0" stroke-width="0.30" >0,29</text>
<line x1="707.3" y1="1238" x2="707.3" y2="1245" stroke="#ddd" stroke-width="1.5"/>
<text x="707.3" y="1265.5" font-size="19.0" fill="#e0e0e0" font-weight="normal" text-anchor="middle" stroke="#e0e0e0" stroke-width="0.30" >0,3</text>
<line x1="774.8" y1="1238" x2="774.8" y2="1245" stroke="#ddd" stroke-width="1.5"/>
<text x="774.8" y="1265.5" font-size="19.0" fill="#e0e0e0" font-weight="normal" text-anchor="middle" stroke="#e0e0e0" stroke-width="0.30" >0,31</text>
<line x1="841.6" y1="1238" x2="841.6" y2="1245" stroke="#ddd" stroke-width="1.5"/>
<text x="841.6" y="1265.5" font-size="19.0" fill="#e0e0e0" font-weight="normal" text-anchor="middle" stroke="#e0e0e0" stroke-width="0.30" >0,32</text>
<line x1="909" y1="1238" x2="909" y2="1245" stroke="#ddd" stroke-width="1.5"/>
<text x="909.0" y="1265.5" font-size="19.0" fill="#e0e0e0" font-weight="normal" text-anchor="middle" stroke="#e0e0e0" stroke-width="0.30" >0,33</text>
<rect x="987.5" y="960.2" width="1221.8000000000002" height="296.3" fill="#000"/>
<rect x="989.5" y="962" width="1217.6999999999998" height="40" fill="url(#gHdr)"/>
<text x="1249.4" y="989.7" font-size="21.0" fill="#fff" font-weight="normal" text-anchor="middle" stroke="#fff" stroke-width="0.70" >0</text>
<text x="1340.5" y="989.7" font-size="21.0" fill="#fff" font-weight="normal" text-anchor="middle" stroke="#fff" stroke-width="0.70" >10</text>
<text x="1431.5" y="989.7" font-size="21.0" fill="#fff" font-weight="normal" text-anchor="middle" stroke="#fff" stroke-width="0.70" >20</text>
<text x="1522.6" y="989.7" font-size="21.0" fill="#fff" font-weight="normal" text-anchor="middle" stroke="#fff" stroke-width="0.70" >30</text>
<text x="1613.6" y="989.7" font-size="21.0" fill="#fff" font-weight="normal" text-anchor="middle" stroke="#fff" stroke-width="0.70" >40</text>
<text x="1704.7" y="989.7" font-size="21.0" fill="#fff" font-weight="normal" text-anchor="middle" stroke="#fff" stroke-width="0.70" >50</text>
<text x="1795.7" y="989.7" font-size="21.0" fill="#fff" font-weight="normal" text-anchor="middle" stroke="#fff" stroke-width="0.70" >60</text>
<text x="1886.8" y="989.7" font-size="21.0" fill="#fff" font-weight="normal" text-anchor="middle" stroke="#fff" stroke-width="0.70" >70</text>
<text x="1977.8" y="989.7" font-size="21.0" fill="#fff" font-weight="normal" text-anchor="middle" stroke="#fff" stroke-width="0.70" >80</text>
<text x="2068.8" y="989.7" font-size="21.0" fill="#fff" font-weight="normal" text-anchor="middle" stroke="#fff" stroke-width="0.70" >90</text>
<text x="2159.9" y="989.7" font-size="21.0" fill="#fff" font-weight="normal" text-anchor="middle" stroke="#fff" stroke-width="0.70" >100</text>
<rect x="989.5" y="1002" width="1217.6999999999998" height="35.9" fill="url(#gRowD)"/>
<text x="1005.6" y="1029.3" font-size="22.0" fill="#f2f2f2" font-weight="bold" text-anchor="start" textLength="85.5" lengthAdjust="spacingAndGlyphs" >x: CIE31</text>
<text x="1209.9" y="1029.3" font-size="22.0" fill="#f2f2f2" font-weight="normal" text-anchor="start" stroke="#f2f2f2" stroke-width="0.35" >0,33</text>
<text x="1301.0" y="1029.3" font-size="22.0" fill="#f2f2f2" font-weight="normal" text-anchor="start" stroke="#f2f2f2" stroke-width="0.35" >0,31</text>
<text x="1392.0" y="1029.3" font-size="22.0" fill="#f2f2f2" font-weight="normal" text-anchor="start" stroke="#f2f2f2" stroke-width="0.35" >0,31</text>
<text x="1483.1" y="1029.3" font-size="22.0" fill="#f2f2f2" font-weight="normal" text-anchor="start" stroke="#f2f2f2" stroke-width="0.35" >0,31</text>
<text x="1574.1" y="1029.3" font-size="22.0" fill="#f2f2f2" font-weight="normal" text-anchor="start" stroke="#f2f2f2" stroke-width="0.35" >0,31</text>
<text x="1665.2" y="1029.3" font-size="22.0" fill="#f2f2f2" font-weight="normal" text-anchor="start" stroke="#f2f2f2" stroke-width="0.35" >0,31</text>
<text x="1756.2" y="1029.3" font-size="22.0" fill="#f2f2f2" font-weight="normal" text-anchor="start" stroke="#f2f2f2" stroke-width="0.35" >0,31</text>
<text x="1847.2" y="1029.3" font-size="22.0" fill="#f2f2f2" font-weight="normal" text-anchor="start" stroke="#f2f2f2" stroke-width="0.35" >0,31</text>
<text x="1938.3" y="1029.3" font-size="22.0" fill="#f2f2f2" font-weight="normal" text-anchor="start" stroke="#f2f2f2" stroke-width="0.35" >0,31</text>
<text x="2029.3" y="1029.3" font-size="22.0" fill="#f2f2f2" font-weight="normal" text-anchor="start" stroke="#f2f2f2" stroke-width="0.35" >0,31</text>
<text x="2120.4" y="1029.3" font-size="22.0" fill="#f2f2f2" font-weight="normal" text-anchor="start" stroke="#f2f2f2" stroke-width="0.35" >0,31</text>
<rect x="989.5" y="1037.9" width="1217.6999999999998" height="36.7" fill="url(#gRowL)"/>
<text x="1005.6" y="1065.2" font-size="22.0" fill="#f2f2f2" font-weight="bold" text-anchor="start" textLength="85.5" lengthAdjust="spacingAndGlyphs" >y: CIE31</text>
<text x="1209.9" y="1065.2" font-size="22.0" fill="#f2f2f2" font-weight="normal" text-anchor="start" stroke="#f2f2f2" stroke-width="0.35" >0,33</text>
<text x="1301.0" y="1065.2" font-size="22.0" fill="#f2f2f2" font-weight="normal" text-anchor="start" stroke="#f2f2f2" stroke-width="0.35" >0,33</text>
<text x="1392.0" y="1065.2" font-size="22.0" fill="#f2f2f2" font-weight="normal" text-anchor="start" stroke="#f2f2f2" stroke-width="0.35" >0,33</text>
<text x="1483.1" y="1065.2" font-size="22.0" fill="#f2f2f2" font-weight="normal" text-anchor="start" stroke="#f2f2f2" stroke-width="0.35" >0,33</text>
<text x="1574.1" y="1065.2" font-size="22.0" fill="#f2f2f2" font-weight="normal" text-anchor="start" stroke="#f2f2f2" stroke-width="0.35" >0,33</text>
<text x="1665.2" y="1065.2" font-size="22.0" fill="#f2f2f2" font-weight="normal" text-anchor="start" stroke="#f2f2f2" stroke-width="0.35" >0,33</text>
<text x="1756.2" y="1065.2" font-size="22.0" fill="#f2f2f2" font-weight="normal" text-anchor="start" stroke="#f2f2f2" stroke-width="0.35" >0,33</text>
<text x="1847.2" y="1065.2" font-size="22.0" fill="#f2f2f2" font-weight="normal" text-anchor="start" stroke="#f2f2f2" stroke-width="0.35" >0,33</text>
<text x="1938.3" y="1065.2" font-size="22.0" fill="#f2f2f2" font-weight="normal" text-anchor="start" stroke="#f2f2f2" stroke-width="0.35" >0,33</text>
<text x="2029.3" y="1065.2" font-size="22.0" fill="#f2f2f2" font-weight="normal" text-anchor="start" stroke="#f2f2f2" stroke-width="0.35" >0,33</text>
<text x="2120.4" y="1065.2" font-size="22.0" fill="#f2f2f2" font-weight="normal" text-anchor="start" stroke="#f2f2f2" stroke-width="0.35" >0,33</text>
<rect x="989.5" y="1074.6" width="1217.6999999999998" height="36.2" fill="url(#gRowD)"/>
<text x="1005.6" y="1101.9" font-size="22.0" fill="#f2f2f2" font-weight="bold" text-anchor="start" textLength="14.5" lengthAdjust="spacingAndGlyphs" >Y</text>
<text x="1209.9" y="1101.9" font-size="22.0" fill="#f2f2f2" font-weight="normal" text-anchor="start" stroke="#f2f2f2" stroke-width="0.35" >0,00</text>
<text x="1301.0" y="1101.9" font-size="22.0" fill="#f2f2f2" font-weight="normal" text-anchor="start" stroke="#f2f2f2" stroke-width="0.35" >3,71</text>
<text x="1392.0" y="1101.9" font-size="22.0" fill="#f2f2f2" font-weight="normal" text-anchor="start" stroke="#f2f2f2" stroke-width="0.35" >16,72</text>
<text x="1483.1" y="1101.9" font-size="22.0" fill="#f2f2f2" font-weight="normal" text-anchor="start" stroke="#f2f2f2" stroke-width="0.35" >40,68</text>
<text x="1574.1" y="1101.9" font-size="22.0" fill="#f2f2f2" font-weight="normal" text-anchor="start" stroke="#f2f2f2" stroke-width="0.35" >77,95</text>
<text x="1665.2" y="1101.9" font-size="22.0" fill="#f2f2f2" font-weight="normal" text-anchor="start" stroke="#f2f2f2" stroke-width="0.35" >128,32</text>
<text x="1756.2" y="1101.9" font-size="22.0" fill="#f2f2f2" font-weight="normal" text-anchor="start" stroke="#f2f2f2" stroke-width="0.35" >191,01</text>
<text x="1847.2" y="1101.9" font-size="22.0" fill="#f2f2f2" font-weight="normal" text-anchor="start" stroke="#f2f2f2" stroke-width="0.35" >266,46</text>
<text x="1938.3" y="1101.9" font-size="22.0" fill="#f2f2f2" font-weight="normal" text-anchor="start" stroke="#f2f2f2" stroke-width="0.35" >360,77</text>
<text x="2029.3" y="1101.9" font-size="22.0" fill="#f2f2f2" font-weight="normal" text-anchor="start" stroke="#f2f2f2" stroke-width="0.35" >471,55</text>
<text x="2120.4" y="1101.9" font-size="22.0" fill="#f2f2f2" font-weight="normal" text-anchor="start" stroke="#f2f2f2" stroke-width="0.35" >596,86</text>
<rect x="989.5" y="1110.8" width="1217.6999999999998" height="37.2" fill="url(#gRowL)"/>
<text x="1005.6" y="1138.1" font-size="22.0" fill="#f2f2f2" font-weight="bold" text-anchor="start" textLength="89.0" lengthAdjust="spacingAndGlyphs" >Target Y</text>
<text x="1209.9" y="1138.1" font-size="22.0" fill="#f2f2f2" font-weight="normal" text-anchor="start" stroke="#f2f2f2" stroke-width="0.35" >0,00</text>
<text x="1301.0" y="1138.1" font-size="22.0" fill="#f2f2f2" font-weight="normal" text-anchor="start" stroke="#f2f2f2" stroke-width="0.35" >6,17</text>
<text x="1392.0" y="1138.1" font-size="22.0" fill="#f2f2f2" font-weight="normal" text-anchor="start" stroke="#f2f2f2" stroke-width="0.35" >19,76</text>
<text x="1483.1" y="1138.1" font-size="22.0" fill="#f2f2f2" font-weight="normal" text-anchor="start" stroke="#f2f2f2" stroke-width="0.35" >43,14</text>
<text x="1574.1" y="1138.1" font-size="22.0" fill="#f2f2f2" font-weight="normal" text-anchor="start" stroke="#f2f2f2" stroke-width="0.35" >79,30</text>
<text x="1665.2" y="1138.1" font-size="22.0" fill="#f2f2f2" font-weight="normal" text-anchor="start" stroke="#f2f2f2" stroke-width="0.35" >128,84</text>
<text x="1756.2" y="1138.1" font-size="22.0" fill="#f2f2f2" font-weight="normal" text-anchor="start" stroke="#f2f2f2" stroke-width="0.35" >190,13</text>
<text x="1847.2" y="1138.1" font-size="22.0" fill="#f2f2f2" font-weight="normal" text-anchor="start" stroke="#f2f2f2" stroke-width="0.35" >265,72</text>
<text x="1938.3" y="1138.1" font-size="22.0" fill="#f2f2f2" font-weight="normal" text-anchor="start" stroke="#f2f2f2" stroke-width="0.35" >360,40</text>
<text x="2029.3" y="1138.1" font-size="22.0" fill="#f2f2f2" font-weight="normal" text-anchor="start" stroke="#f2f2f2" stroke-width="0.35" >472,30</text>
<text x="2120.4" y="1138.1" font-size="22.0" fill="#f2f2f2" font-weight="normal" text-anchor="start" stroke="#f2f2f2" stroke-width="0.35" >596,86</text>
<rect x="989.5" y="1148" width="1217.6999999999998" height="35.7" fill="url(#gRowD)"/>
<text x="1005.6" y="1175.3" font-size="22.0" fill="#f2f2f2" font-weight="bold" text-anchor="start" textLength="181.0" lengthAdjust="spacingAndGlyphs" >Gamma Log/Log</text>
<text x="1209.9" y="1175.3" font-size="22.0" fill="#f2f2f2" font-weight="normal" text-anchor="start" stroke="#f2f2f2" stroke-width="0.35" >1,28</text>
<text x="1301.0" y="1175.3" font-size="22.0" fill="#f2f2f2" font-weight="normal" text-anchor="start" stroke="#f2f2f2" stroke-width="0.35" >2,23</text>
<text x="1392.0" y="1175.3" font-size="22.0" fill="#f2f2f2" font-weight="normal" text-anchor="start" stroke="#f2f2f2" stroke-width="0.35" >2,22</text>
<text x="1483.1" y="1175.3" font-size="22.0" fill="#f2f2f2" font-weight="normal" text-anchor="start" stroke="#f2f2f2" stroke-width="0.35" >2,22</text>
<text x="1574.1" y="1175.3" font-size="22.0" fill="#f2f2f2" font-weight="normal" text-anchor="start" stroke="#f2f2f2" stroke-width="0.35" >2,22</text>
<text x="1665.2" y="1175.3" font-size="22.0" fill="#f2f2f2" font-weight="normal" text-anchor="start" stroke="#f2f2f2" stroke-width="0.35" >2,23</text>
<text x="1756.2" y="1175.3" font-size="22.0" fill="#f2f2f2" font-weight="normal" text-anchor="start" stroke="#f2f2f2" stroke-width="0.35" >2,23</text>
<text x="1847.2" y="1175.3" font-size="22.0" fill="#f2f2f2" font-weight="normal" text-anchor="start" stroke="#f2f2f2" stroke-width="0.35" >2,24</text>
<text x="1938.3" y="1175.3" font-size="22.0" fill="#f2f2f2" font-weight="normal" text-anchor="start" stroke="#f2f2f2" stroke-width="0.35" >2,26</text>
<text x="2029.3" y="1175.3" font-size="22.0" fill="#f2f2f2" font-weight="normal" text-anchor="start" stroke="#f2f2f2" stroke-width="0.35" >2,28</text>
<text x="2120.4" y="1175.3" font-size="22.0" fill="#f2f2f2" font-weight="normal" text-anchor="start" stroke="#f2f2f2" stroke-width="0.35" >2,27</text>
<rect x="989.5" y="1183.7" width="1217.6999999999998" height="36.3" fill="url(#gRowL)"/>
<text x="1005.6" y="1211.0" font-size="22.0" fill="#f2f2f2" font-weight="bold" text-anchor="start" textLength="42.0" lengthAdjust="spacingAndGlyphs" >CCT</text>
<text x="1209.9" y="1211.0" font-size="22.0" fill="#f2f2f2" font-weight="normal" text-anchor="start" stroke="#f2f2f2" stroke-width="0.35" >5456,00</text>
<text x="1301.0" y="1211.0" font-size="22.0" fill="#f2f2f2" font-weight="normal" text-anchor="start" stroke="#f2f2f2" stroke-width="0.35" >6567,00</text>
<text x="1392.0" y="1211.0" font-size="22.0" fill="#f2f2f2" font-weight="normal" text-anchor="start" stroke="#f2f2f2" stroke-width="0.35" >6535,00</text>
<text x="1483.1" y="1211.0" font-size="22.0" fill="#f2f2f2" font-weight="normal" text-anchor="start" stroke="#f2f2f2" stroke-width="0.35" >6498,00</text>
<text x="1574.1" y="1211.0" font-size="22.0" fill="#f2f2f2" font-weight="normal" text-anchor="start" stroke="#f2f2f2" stroke-width="0.35" >6489,00</text>
<text x="1665.2" y="1211.0" font-size="22.0" fill="#f2f2f2" font-weight="normal" text-anchor="start" stroke="#f2f2f2" stroke-width="0.35" >6502,00</text>
<text x="1756.2" y="1211.0" font-size="22.0" fill="#f2f2f2" font-weight="normal" text-anchor="start" stroke="#f2f2f2" stroke-width="0.35" >6499,00</text>
<text x="1847.2" y="1211.0" font-size="22.0" fill="#f2f2f2" font-weight="normal" text-anchor="start" stroke="#f2f2f2" stroke-width="0.35" >6488,00</text>
<text x="1938.3" y="1211.0" font-size="22.0" fill="#f2f2f2" font-weight="normal" text-anchor="start" stroke="#f2f2f2" stroke-width="0.35" >6481,00</text>
<text x="2029.3" y="1211.0" font-size="22.0" fill="#f2f2f2" font-weight="normal" text-anchor="start" stroke="#f2f2f2" stroke-width="0.35" >6489,00</text>
<text x="2120.4" y="1211.0" font-size="22.0" fill="#f2f2f2" font-weight="normal" text-anchor="start" stroke="#f2f2f2" stroke-width="0.35" >6510,00</text>
<rect x="989.5" y="1220" width="1217.6999999999998" height="36.5" fill="url(#gRowD)"/>
<text x="1005.6" y="1247.3" font-size="22.0" fill="#f2f2f2" font-weight="bold" text-anchor="start" textLength="88.0" lengthAdjust="spacingAndGlyphs" >ΔE 2000</text>
<text x="1209.9" y="1247.3" font-size="22.0" fill="#f2f2f2" font-weight="normal" text-anchor="start" stroke="#f2f2f2" stroke-width="0.35" >0,00</text>
<text x="1301.0" y="1247.3" font-size="22.0" fill="#f2f2f2" font-weight="normal" text-anchor="start" stroke="#f2f2f2" stroke-width="0.35" >2,24</text>
<text x="1392.0" y="1247.3" font-size="22.0" fill="#f2f2f2" font-weight="normal" text-anchor="start" stroke="#f2f2f2" stroke-width="0.35" >1,41</text>
<text x="1483.1" y="1247.3" font-size="22.0" fill="#f2f2f2" font-weight="normal" text-anchor="start" stroke="#f2f2f2" stroke-width="0.35" >1,12</text>
<text x="1574.1" y="1247.3" font-size="22.0" fill="#f2f2f2" font-weight="normal" text-anchor="start" stroke="#f2f2f2" stroke-width="0.35" >1,09</text>
<text x="1665.2" y="1247.3" font-size="22.0" fill="#f2f2f2" font-weight="normal" text-anchor="start" stroke="#f2f2f2" stroke-width="0.35" >1,02</text>
<text x="1756.2" y="1247.3" font-size="22.0" fill="#f2f2f2" font-weight="normal" text-anchor="start" stroke="#f2f2f2" stroke-width="0.35" >1,18</text>
<text x="1847.2" y="1247.3" font-size="22.0" fill="#f2f2f2" font-weight="normal" text-anchor="start" stroke="#f2f2f2" stroke-width="0.35" >1,48</text>
<text x="1938.3" y="1247.3" font-size="22.0" fill="#f2f2f2" font-weight="normal" text-anchor="start" stroke="#f2f2f2" stroke-width="0.35" >1,55</text>
<text x="2029.3" y="1247.3" font-size="22.0" fill="#f2f2f2" font-weight="normal" text-anchor="start" stroke="#f2f2f2" stroke-width="0.35" >1,74</text>
<text x="2120.4" y="1247.3" font-size="22.0" fill="#f2f2f2" font-weight="normal" text-anchor="start" stroke="#f2f2f2" stroke-width="0.35" >1,41</text>
<rect x="980" y="962" width="7.5" height="296" fill="#2e2e2e"/>
<rect x="0" y="1284" width="2547" height="96" fill="#2c2c2c"/>
<rect x="1.6" y="1287" width="185.3" height="91.3" rx="6" fill="url(#gBtn)" stroke="#b0b0b0" stroke-width="1"/>
<rect x="9.0" y="1294.5" width="170" height="53.8" rx="5" fill="#000" stroke="#5a5a5a" stroke-width="1"/>
<text x="94.2" y="1371.5" font-size="16.0" fill="#282828" font-weight="bold" text-anchor="middle" >0</text>
<rect x="190.0" y="1287" width="185.3" height="91.3" rx="6" fill="url(#gBtn)" stroke="#b0b0b0" stroke-width="1"/>
<rect x="197.4" y="1294.5" width="170" height="53.8" rx="5" fill="#1a1a1a" stroke="#5a5a5a" stroke-width="1"/>
<text x="282.6" y="1371.5" font-size="16.0" fill="#282828" font-weight="bold" text-anchor="middle" >10</text>
<rect x="378.5" y="1287" width="185.3" height="91.3" rx="6" fill="url(#gBtn)" stroke="#b0b0b0" stroke-width="1"/>
<rect x="385.9" y="1294.5" width="170" height="53.8" rx="5" fill="#333" stroke="#5a5a5a" stroke-width="1"/>
<text x="471.1" y="1371.5" font-size="16.0" fill="#282828" font-weight="bold" text-anchor="middle" >20</text>
<rect x="566.9" y="1287" width="185.3" height="91.3" rx="6" fill="url(#gBtn)" stroke="#b0b0b0" stroke-width="1"/>
<rect x="574.3" y="1294.5" width="170" height="53.8" rx="5" fill="#4d4d4d" stroke="#5a5a5a" stroke-width="1"/>
<text x="659.5" y="1371.5" font-size="16.0" fill="#282828" font-weight="bold" text-anchor="middle" >30</text>
<rect x="755.4" y="1287" width="185.3" height="91.3" rx="6" fill="url(#gBtn)" stroke="#b0b0b0" stroke-width="1"/>
<rect x="762.8" y="1294.5" width="170" height="53.8" rx="5" fill="#666" stroke="#5a5a5a" stroke-width="1"/>
<text x="848.0" y="1371.5" font-size="16.0" fill="#282828" font-weight="bold" text-anchor="middle" >40</text>
<rect x="943.8" y="1287" width="185.3" height="91.3" rx="6" fill="url(#gBtn)" stroke="#b0b0b0" stroke-width="1"/>
<rect x="951.2" y="1294.5" width="170" height="53.8" rx="5" fill="#808080" stroke="#5a5a5a" stroke-width="1"/>
<text x="1036.4" y="1371.5" font-size="16.0" fill="#282828" font-weight="bold" text-anchor="middle" >50</text>
<rect x="1132.2" y="1287" width="185.3" height="91.3" rx="6" fill="url(#gBtn)" stroke="#b0b0b0" stroke-width="1"/>
<rect x="1139.6" y="1294.5" width="170" height="53.8" rx="5" fill="#999" stroke="#5a5a5a" stroke-width="1"/>
<text x="1224.8" y="1371.5" font-size="16.0" fill="#282828" font-weight="bold" text-anchor="middle" >60</text>
<rect x="1320.7" y="1287" width="185.3" height="91.3" rx="6" fill="url(#gBtn)" stroke="#b0b0b0" stroke-width="1"/>
<rect x="1328.1" y="1294.5" width="170" height="53.8" rx="5" fill="#b3b3b3" stroke="#5a5a5a" stroke-width="1"/>
<text x="1413.3" y="1371.5" font-size="16.0" fill="#282828" font-weight="bold" text-anchor="middle" >70</text>
<rect x="1509.1" y="1287" width="185.3" height="91.3" rx="6" fill="url(#gBtn)" stroke="#b0b0b0" stroke-width="1"/>
<rect x="1516.5" y="1294.5" width="170" height="53.8" rx="5" fill="#ccc" stroke="#5a5a5a" stroke-width="1"/>
<text x="1601.7" y="1371.5" font-size="16.0" fill="#282828" font-weight="bold" text-anchor="middle" >80</text>
<rect x="1697.6" y="1287" width="185.3" height="91.3" rx="6" fill="url(#gBtn)" stroke="#b0b0b0" stroke-width="1"/>
<rect x="1705.0" y="1294.5" width="170" height="53.8" rx="5" fill="#e6e6e6" stroke="#5a5a5a" stroke-width="1"/>
<text x="1790.2" y="1371.5" font-size="16.0" fill="#282828" font-weight="bold" text-anchor="middle" >90</text>
<rect x="1886.0" y="1287" width="185.3" height="91.3" rx="6" fill="url(#gBtnSel)"/>
<rect x="1892.9" y="1294.2" width="170.5" height="54.5" rx="6" fill="#fff"/>
<text x="1965.4" y="1371.5" font-size="15.5" fill="#fff" font-weight="bold" text-anchor="start" textLength="26.4" lengthAdjust="spacingAndGlyphs" >100</text>
<rect x="2075" y="1287.3" width="73" height="91.2" rx="5" fill="url(#gCtl2)"/>
<rect x="2075" y="1287.3" width="73" height="27" rx="5" fill="url(#gUpBtn)"/>
<line x1="2075" y1="1314.4" x2="2148" y2="1314.4" stroke="#333" stroke-width="1.5"/>
<circle cx="2111.2" cy="1300" r="11.5" fill="url(#gIco)"/>
<path d="M2104 1303.3 L2111.2 1295.7 L2118.3 1303.3 Z" fill="#333"/>
<rect x="2090.1" y="1325" width="43.8" height="43" rx="6" fill="#a6a6a6" stroke="#1c1c1c" stroke-width="3.4"/>
<rect x="2091.8" y="1347.1" width="40.4" height="20.2" rx="4" fill="#8f8f8f"/>
<rect x="2091.8" y="1347.1" width="40.4" height="8" fill="#8f8f8f"/>
<line x1="2088.4" y1="1347.1" x2="2135.6" y2="1347.1" stroke="#1a1a1a" stroke-width="1"/>
<rect x="2101.1" y="1336.7" width="20.8" height="10.4" fill="#1a1a1a"/>
<rect x="2101.1" y="1347.1" width="20.8" height="9.9" fill="#000"/>
<rect x="2149" y="1287.3" width="339" height="44.3" fill="url(#gCtl)"/>
<line x1="2218.3" y1="1287.3" x2="2218.3" y2="1331.6" stroke="#1a1a1a" stroke-width="1.4"/>
<line x1="2286" y1="1287.3" x2="2286" y2="1331.6" stroke="#1a1a1a" stroke-width="1.4"/>
<line x1="2353.5" y1="1287.3" x2="2353.5" y2="1331.6" stroke="#1a1a1a" stroke-width="1.4"/>
<line x1="2421" y1="1287.3" x2="2421" y2="1331.6" stroke="#1a1a1a" stroke-width="1.4"/>
<rect x="2488" y="1287.3" width="59" height="44.3" fill="url(#gDarkSec)"/>
<circle cx="2524.6" cy="1309.3" r="15" fill="url(#gDarkCirc)"/>
<circle cx="2183.3" cy="1309.6" r="15" fill="url(#gIco)"/>
<circle cx="2251.8" cy="1309.6" r="15" fill="url(#gIco)"/>
<circle cx="2320" cy="1309.6" r="15" fill="url(#gIco)"/>
<circle cx="2387" cy="1309.6" r="15" fill="url(#gIco)"/>
<circle cx="2454.8" cy="1309.6" r="15" fill="url(#gIco)"/>
<rect x="2177.3" y="1303.6" width="12" height="12" fill="#333"/>
<path d="M2248 1302 L2258.5 1309.6 L2248 1317.2 Z" fill="#333"/>
<path d="M2315 1303.5 H2312.3 V1317 H2315 M2325 1303.5 H2327.7 V1317 H2325" fill="none" stroke="#333" stroke-width="2.8"/>
<circle cx="2317.5" cy="1309.6" r="1.2" fill="#333"/><circle cx="2322.5" cy="1309.6" r="1.2" fill="#333"/>
<path d="M2387 1309.6 C2384 1305 2379 1305 2379 1309.6 C2379 1314.2 2384 1314.2 2387 1309.6 C2390 1305 2395 1305 2395 1309.6 C2395 1314.2 2390 1314.2 2387 1309.6 Z" fill="none" stroke="#333" stroke-width="2.4"/>
<path d="M2447.5 1307 A7.5 7.5 0 0 1 2461 1305.5 M2462 1312.2 A7.5 7.5 0 0 1 2448.5 1313.7" fill="none" stroke="#333" stroke-width="2.6"/>
<path d="M2458 1302 L2463.5 1301 L2462.5 1307 Z M2451.5 1317.2 L2446 1318.2 L2447 1312.2 Z" fill="#333"/>
<rect x="2149" y="1333.2" width="398" height="45.3" fill="url(#gCtl)"/>
<line x1="2353.5" y1="1333.2" x2="2353.5" y2="1378.5" stroke="#1a1a1a" stroke-width="1.4"/>
<circle cx="2195.4" cy="1356.1" r="15" fill="url(#gIco)"/>
<circle cx="2514.7" cy="1356.1" r="15" fill="url(#gIco)"/>
<path d="M2196 1349 L2190 1356.1 L2196 1363.2 M2202 1349 L2196 1356.1 L2202 1363.2" fill="none" stroke="#333" stroke-width="2.2"/>
<path d="M2508 1349 L2514 1356.1 L2508 1363.2 M2514 1349 L2520 1356.1 L2514 1363.2" fill="none" stroke="#333" stroke-width="2.2"/>
<text x="2235.9" y="1368.0" font-size="34.0" fill="#333" font-weight="bold" text-anchor="start" textLength="75.0" lengthAdjust="spacingAndGlyphs" >Back</text>
<text x="2396.1" y="1368.0" font-size="34.0" fill="#333" font-weight="bold" text-anchor="start" textLength="76.9" lengthAdjust="spacingAndGlyphs" >Next</text>
</svg>
</body></html>
